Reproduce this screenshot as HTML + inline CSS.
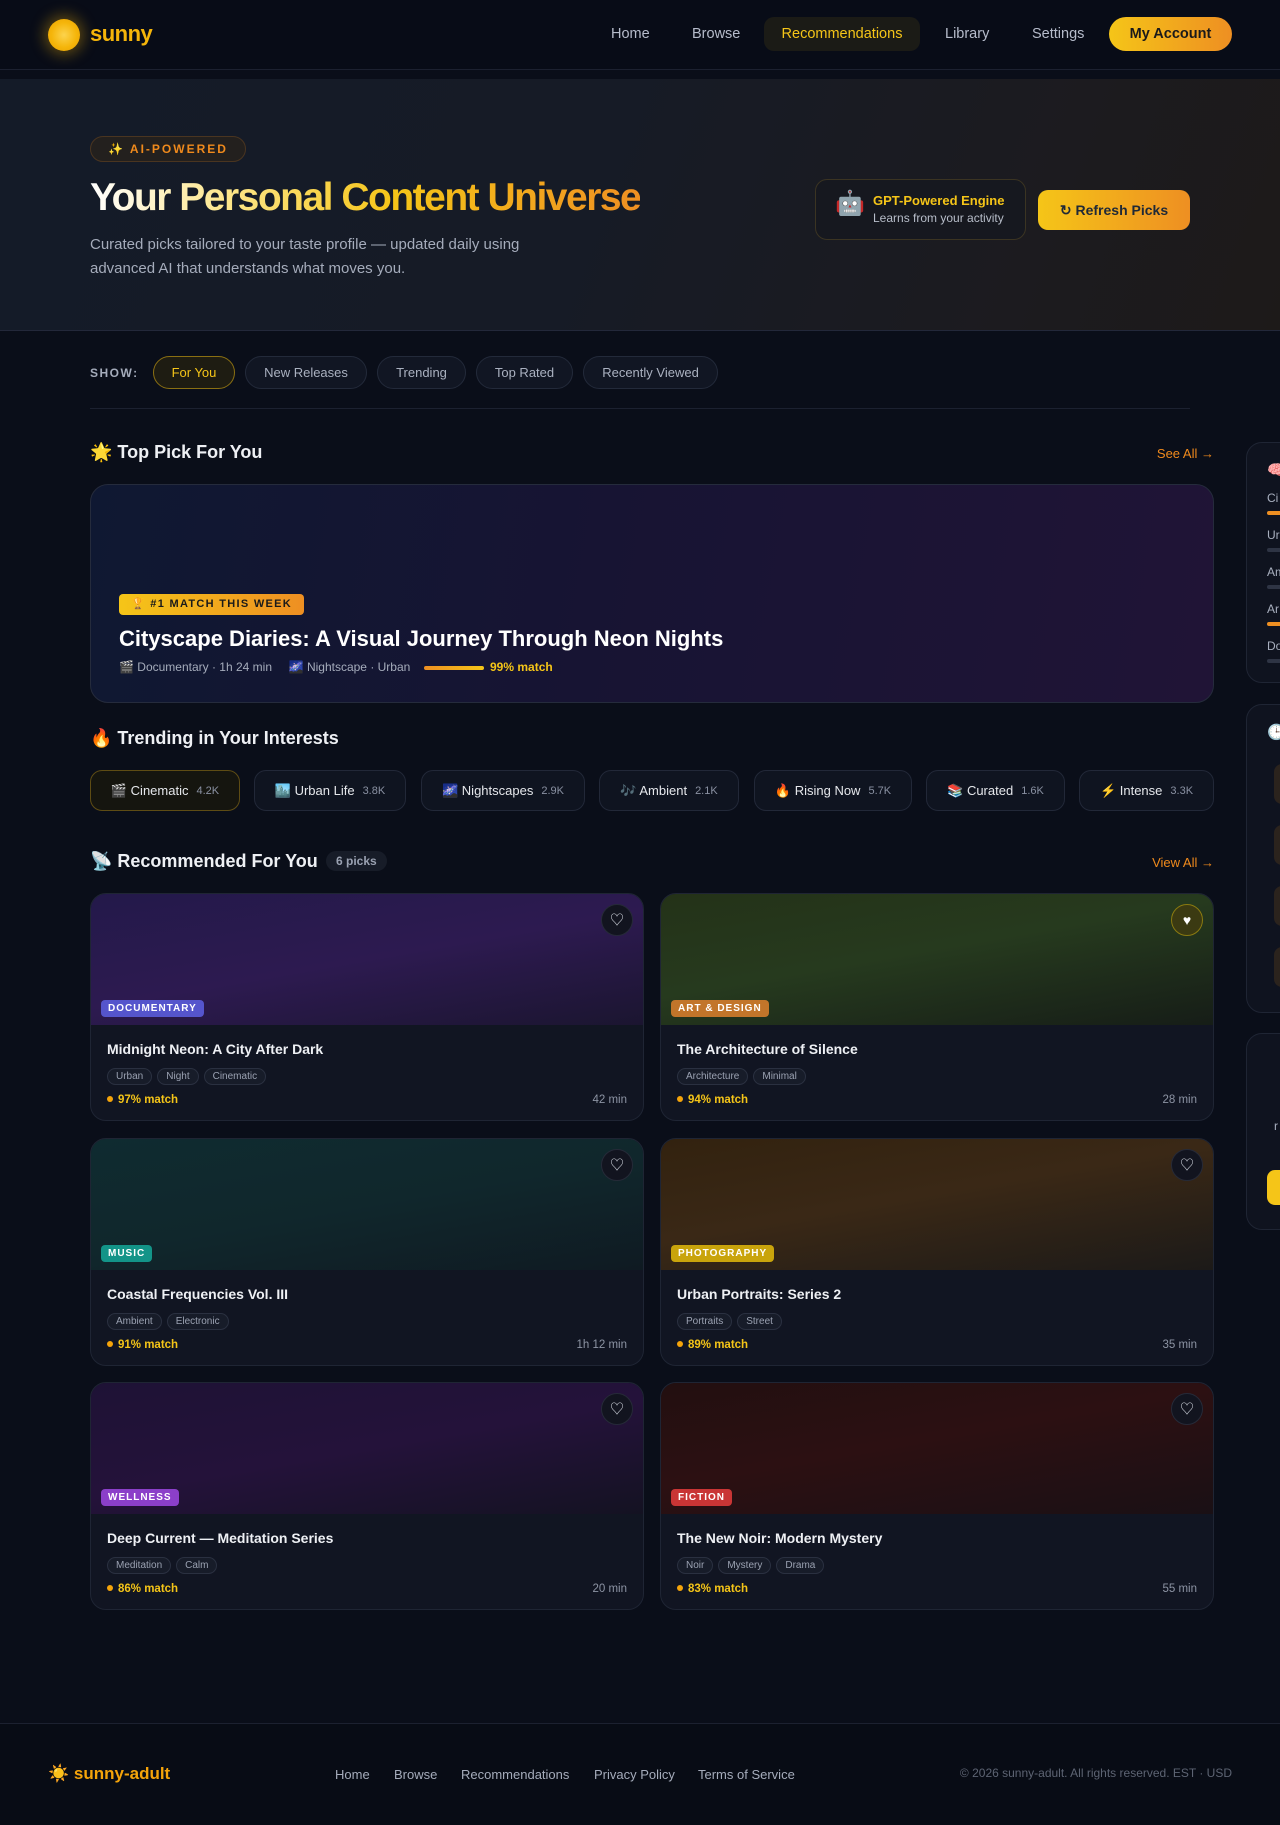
<!DOCTYPE html>
<html><head><meta charset="utf-8"><style>
*{box-sizing:border-box;margin:0;padding:0}
body{width:1280px;height:1825px;overflow:hidden;background:#0a0e19;font-family:"Liberation Sans","Noto Sans CJK SC",sans-serif;color:#e5e7eb;position:relative}
.abs{position:absolute}
.nav{left:0;top:0;width:1280px;height:70px;border-bottom:1px solid #1c2130;background:#080c17}
.logo{left:48px;top:19px;width:32px;height:32px;border-radius:50%;background:radial-gradient(circle,#fcd34d 0,#f5b50a 55%,#e9a000 100%);box-shadow:0 0 14px 4px rgba(245,181,10,.35)}
.logotxt{left:90px;top:21px;font-size:22px;font-weight:bold;color:#f5b50a;letter-spacing:-.5px}
.nl{top:17px;height:34px;line-height:34px;font-size:14.5px;color:#b6bccb;padding:0 18px;border-radius:10px}
.hero{left:0;top:79px;width:1280px;height:252px;background:linear-gradient(110deg,#141b28 0%,#161b26 45%,#1c1b1f 80%,#1d1a19 100%);border-bottom:1px solid #23283a}
.pill{border-radius:20px;border:1px solid #232a3a;background:#111623;color:#aab1c0;font-size:13px;text-align:center;height:33px;line-height:31px;top:356px}
.h2{font-size:18px;font-weight:bold;color:#eef0f4}
.link{font-size:13px;color:#f08a1c}
.chip{top:770px;height:41px;border:1px solid #222838;border-radius:12px;background:#0f1420;display:flex;align-items:center;justify-content:center;gap:8px;font-size:13px;color:#e5e7eb}
.chip small{font-size:11px;color:#8a91a2}
.card{width:554px;height:228px;border:1px solid #1f2534;border-radius:16px;background:#111522;overflow:hidden}
.img{height:131px;position:relative}
.cat{position:absolute;left:10px;bottom:8px;font-size:10px;font-weight:bold;letter-spacing:1px;color:#fff;padding:3px 7px;border-radius:4px}
.heart{position:absolute;right:10px;top:10px;width:32px;height:32px;border-radius:50%;background:#12141f;border:1px solid #262a38;color:#cfd3dc;text-align:center;line-height:30px;font-size:14px}
.body{padding:15px 16px}
.t{font-size:14px;font-weight:bold;color:#eef0f4;margin-top:1px}
.tags{margin-top:11px;display:flex;gap:5px}
.tags span{font-size:10px;color:#9ba2b2;border:1px solid #2a3040;background:#171c29;border-radius:10px;padding:2px 8px}
.meta{margin-top:9px;display:flex;justify-content:space-between;font-size:11.5px}
.m{color:#f5c518;font-weight:bold}
.m:before{content:"";display:inline-block;width:6px;height:6px;border-radius:50%;background:#f5a40a;margin-right:5px;vertical-align:1px}
.d{color:#8d94a4}
.side{left:1246px;width:300px;border:1px solid #1f2534;border-radius:16px;background:#0f131f}
.bar{height:4px;border-radius:2px;background:#2e3444;margin-top:6px;width:30px}
.sl{font-size:12px;color:#a9b0bf}
.fl{top:1767px;font-size:13px;color:#a5acbb}
</style></head><body>

<div class="abs nav"></div>
<div class="abs logo"></div>
<div class="abs logotxt">sunny</div>
<div class="abs nl" style="left:593px">Home</div>
<div class="abs nl" style="left:674px">Browse</div>
<div class="abs nl" style="left:764px;width:156px;background:#1b1b16;color:#f5c518;text-align:center;padding:0">Recommendations</div>
<div class="abs nl" style="left:927px">Library</div>
<div class="abs nl" style="left:1014px">Settings</div>
<div class="abs" style="left:1109px;top:17px;width:123px;height:34px;border-radius:17px;background:linear-gradient(90deg,#f5c518,#ee8f22);color:#1a1a1a;font-weight:bold;font-size:14.5px;text-align:center;line-height:34px">My Account</div>

<div class="abs hero"></div>
<div class="abs" style="left:90px;top:136px;width:156px;height:26px;border-radius:13px;border:1px solid #4a3520;background:#23201e;color:#f08a1c;font-size:12px;font-weight:bold;letter-spacing:2px;line-height:24px;text-align:center">✨ AI-POWERED</div>
<div class="abs" style="left:90px;top:176px;font-size:39px;font-weight:bold;letter-spacing:-1.5px;background:linear-gradient(90deg,#fff 0,#fde68a 25%,#f5c518 55%,#ee8f22 100%);-webkit-background-clip:text;color:transparent;white-space:nowrap">Your Personal Content Universe</div>
<div class="abs" style="left:90px;top:233px;width:470px;font-size:15px;line-height:24px;color:#a5acbb">Curated picks tailored to your taste profile — updated daily using advanced AI that understands what moves you.</div>
<div class="abs" style="left:815px;top:179px;width:211px;height:61px;border:1px solid #3b3422;border-radius:12px;background:#16181f"></div>
<div class="abs" style="left:835px;top:189px;font-size:24px">🤖</div>
<div class="abs" style="left:873px;top:193px;font-size:13px;font-weight:bold;color:#f5c518">GPT-Powered Engine</div>
<div class="abs" style="left:873px;top:211px;font-size:12px;color:#b7bdc9">Learns from your activity</div>
<div class="abs" style="left:1038px;top:190px;width:152px;height:40px;border-radius:10px;background:linear-gradient(90deg,#f5c518,#ee8f22);color:#1f2937;font-weight:bold;font-size:14px;text-align:center;line-height:40px">↻ Refresh Picks</div>

<div class="abs" style="left:90px;top:366px;font-size:12px;font-weight:bold;letter-spacing:1.5px;color:#a5acbb">SHOW:</div>
<div class="abs pill" style="left:153px;width:82px;border-color:#8a6f12;background:#1e1c12;color:#f5c518">For You</div>
<div class="abs pill" style="left:245px;width:122px">New Releases</div>
<div class="abs pill" style="left:377px;width:89px">Trending</div>
<div class="abs pill" style="left:476px;width:97px">Top Rated</div>
<div class="abs pill" style="left:583px;width:135px">Recently Viewed</div>
<div class="abs" style="left:90px;top:408px;width:1100px;height:1px;background:#1c2130"></div>

<div class="abs h2" style="left:90px;top:442px">🌟 Top Pick For You</div>
<div class="abs link" style="right:66px;top:446px">See All →</div>
<div class="abs" style="left:90px;top:484px;width:1124px;height:219px;border:1px solid #252b3c;border-radius:18px;background:linear-gradient(100deg,#0f1832 0%,#171433 45%,#201436 100%)"></div>
<div class="abs" style="left:119px;top:594px;width:185px;height:21px;border-radius:4px;background:linear-gradient(90deg,#f5c518,#ee8f22);color:#1a1a1a;font-size:11px;font-weight:bold;letter-spacing:1.3px;line-height:21px;text-align:center">🏆 #1 MATCH THIS WEEK</div>
<div class="abs" style="left:119px;top:626px;font-size:22px;font-weight:bold;color:#fff">Cityscape Diaries: A Visual Journey Through Neon Nights</div>
<div class="abs" style="left:119px;top:660px;font-size:12px;color:#a5acbb;white-space:nowrap">🎬 Documentary · 1h 24 min &nbsp; &nbsp; 🌌 Nightscape · Urban</div>
<div class="abs" style="left:424px;top:666px;width:60px;height:4px;border-radius:2px;background:linear-gradient(90deg,#ee8f22,#f5c518)"></div>
<div class="abs" style="left:490px;top:660px;font-size:12px;font-weight:bold;color:#f5c518">99% match</div>

<div class="abs h2" style="left:90px;top:728px">🔥 Trending in Your Interests</div>
<div class="abs chip" style="left:90px;width:150px;border-color:#5e4c14;background:#15150f">🎬 Cinematic <small>4.2K</small></div>
<div class="abs chip" style="left:254px;width:152px">🏙️ Urban Life <small>3.8K</small></div>
<div class="abs chip" style="left:421px;width:164px">🌌 Nightscapes <small>2.9K</small></div>
<div class="abs chip" style="left:599px;width:140px">🎶 Ambient <small>2.1K</small></div>
<div class="abs chip" style="left:754px;width:158px">🔥 Rising Now <small>5.7K</small></div>
<div class="abs chip" style="left:926px;width:139px">📚 Curated <small>1.6K</small></div>
<div class="abs chip" style="left:1079px;width:135px">⚡ Intense <small>3.3K</small></div>

<div class="abs h2" style="left:90px;top:851px">📡 Recommended For You</div>
<div class="abs" style="left:326px;top:851px;padding:3px 10px;border-radius:12px;background:#171c28;color:#9aa1b1;font-size:12px;font-weight:bold">6 picks</div>
<div class="abs link" style="right:66px;top:855px">View All →</div>

<div class="abs card" style="left:90px;top:893px"><div class="img" style="background:linear-gradient(170deg,#23194a 0%,#2d1a50 50%,#1b1530 100%)"><div class="heart">♡</div><div class="cat" style="background:#5555cc">DOCUMENTARY</div></div><div class="body"><div class="t">Midnight Neon: A City After Dark</div><div class="tags"><span>Urban</span><span>Night</span><span>Cinematic</span></div><div class="meta"><span class="m">97% match</span><span class="d">42 min</span></div></div></div>
<div class="abs card" style="left:660px;top:893px"><div class="img" style="background:linear-gradient(170deg,#243218 0%,#263a1e 45%,#161d17 100%)"><div class="heart" style="background:#3b3a12;border-color:#8a7a10;color:#fff">♥</div><div class="cat" style="background:#c2752a">ART &amp; DESIGN</div></div><div class="body"><div class="t">The Architecture of Silence</div><div class="tags"><span>Architecture</span><span>Minimal</span></div><div class="meta"><span class="m">94% match</span><span class="d">28 min</span></div></div></div>

<div class="abs card" style="left:90px;top:1138px"><div class="img" style="background:linear-gradient(170deg,#0f2b30 0%,#10272c 50%,#0f1a22 100%)"><div class="heart">♡</div><div class="cat" style="background:#139488">MUSIC</div></div><div class="body"><div class="t">Coastal Frequencies Vol. III</div><div class="tags"><span>Ambient</span><span>Electronic</span></div><div class="meta"><span class="m">91% match</span><span class="d">1h 12 min</span></div></div></div>
<div class="abs card" style="left:660px;top:1138px"><div class="img" style="background:linear-gradient(170deg,#32220f 0%,#3a2816 45%,#1c1a18 100%)"><div class="heart">♡</div><div class="cat" style="background:#c9a40c">PHOTOGRAPHY</div></div><div class="body"><div class="t">Urban Portraits: Series 2</div><div class="tags"><span>Portraits</span><span>Street</span></div><div class="meta"><span class="m">89% match</span><span class="d">35 min</span></div></div></div>

<div class="abs card" style="left:90px;top:1382px"><div class="img" style="background:linear-gradient(170deg,#1e1235 0%,#24123a 50%,#141222 100%)"><div class="heart">♡</div><div class="cat" style="background:#8b3fc9">WELLNESS</div></div><div class="body"><div class="t">Deep Current — Meditation Series</div><div class="tags"><span>Meditation</span><span>Calm</span></div><div class="meta"><span class="m">86% match</span><span class="d">20 min</span></div></div></div>
<div class="abs card" style="left:660px;top:1382px"><div class="img" style="background:linear-gradient(170deg,#220f10 0%,#2c1012 45%,#1a1015 100%)"><div class="heart">♡</div><div class="cat" style="background:#c93535">FICTION</div></div><div class="body"><div class="t">The New Noir: Modern Mystery</div><div class="tags"><span>Noir</span><span>Mystery</span><span>Drama</span></div><div class="meta"><span class="m">83% match</span><span class="d">55 min</span></div></div></div>

<div class="abs side" style="top:442px;height:241px;padding:18px 20px">
<div style="font-size:15px">🧠</div>
<div class="sl" style="margin-top:12px">Ci</div><div class="bar" style="background:#ee8f22"></div>
<div class="sl" style="margin-top:13px">Ur</div><div class="bar"></div>
<div class="sl" style="margin-top:13px">Am</div><div class="bar"></div>
<div class="sl" style="margin-top:13px">Ar</div><div class="bar" style="background:#ee8f22"></div>
<div class="sl" style="margin-top:13px">Do</div><div class="bar"></div>
</div>
<div class="abs side" style="top:704px;height:309px;padding:18px 20px">
<div style="font-size:15px">🕒</div>
<div class="abs" style="left:27px;top:59px;width:40px;height:40px;border-radius:8px;background:#2b231d"></div>
<div class="abs" style="left:27px;top:120px;width:40px;height:40px;border-radius:8px;background:#2b231d"></div>
<div class="abs" style="left:27px;top:181px;width:40px;height:40px;border-radius:8px;background:#2b231d"></div>
<div class="abs" style="left:27px;top:242px;width:40px;height:40px;border-radius:8px;background:#2b231d"></div>
</div>
<div class="abs side" style="top:1033px;height:197px">
<div class="abs sl" style="left:27px;top:85px">r</div>
<div class="abs" style="left:20px;top:136px;width:200px;height:35px;border-radius:8px;background:#f5c518"></div>
</div>

<div class="abs" style="left:0;top:1723px;width:1280px;height:102px;border-top:1px solid #1c2130;background:#080c15"></div>
<div class="abs" style="left:48px;top:1764px;font-size:17px;font-weight:bold;color:#f5a40a">☀️ sunny-adult</div>
<div class="abs fl" style="left:335px">Home</div>
<div class="abs fl" style="left:394px">Browse</div>
<div class="abs fl" style="left:461px">Recommendations</div>
<div class="abs fl" style="left:594px">Privacy Policy</div>
<div class="abs fl" style="left:698px">Terms of Service</div>
<div class="abs" style="right:48px;top:1766px;font-size:12px;color:#5d6473">© 2026 sunny-adult. All rights reserved. EST · USD</div>
</body></html>
